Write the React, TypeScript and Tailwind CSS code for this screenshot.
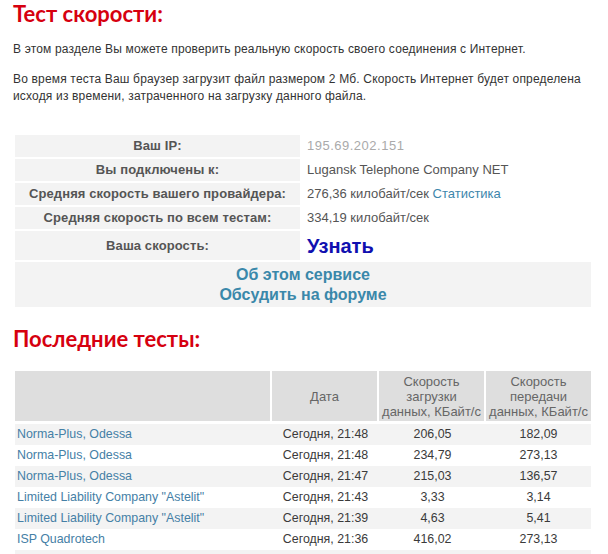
import React from "react";

const rows = [
  ["Norma-Plus, Odessa", "Сегодня, 21:48", "206,05", "182,09"],
  ["Norma-Plus, Odessa", "Сегодня, 21:48", "234,79", "273,13"],
  ["Norma-Plus, Odessa", "Сегодня, 21:47", "215,03", "136,57"],
  ['Limited Liability Company "Astelit"', "Сегодня, 21:43", "3,33", "3,14"],
  ['Limited Liability Company "Astelit"', "Сегодня, 21:39", "4,63", "5,41"],
  ["ISP Quadrotech", "Сегодня, 21:36", "416,02", "273,13"],
  ["", "", "", ""],
];

function Label({ children, tall }: { children: React.ReactNode; tall?: boolean }) {
  return (
    <div
      className={`bg-[#f3f3f3] flex items-center justify-center font-bold text-[13px] tracking-[0.1px] text-[#555] ${
        tall ? "h-[29px]" : "h-[22px]"
      }`}
    >
      {children}
    </div>
  );
}

function Value({ children, tall }: { children: React.ReactNode; tall?: boolean }) {
  return (
    <div className={`flex items-center pl-[5px] text-[13px] text-[#555] ${tall ? "h-[29px]" : "h-[22px]"}`}>
      {children}
    </div>
  );
}

export default function App() {
  return (
    <div className="w-[608px] h-[554px] overflow-hidden bg-white font-['Liberation_Sans',Arial,sans-serif]">
      <h1 className="pl-[13px] pt-[1px] h-[30px] text-[22px] leading-[26px] font-bold text-[#d6000f] font-['Lato',sans-serif]">
        Тест скорости:
      </h1>
      <p className="pl-[13px] mt-[11px] text-[12px] leading-[17px] tracking-[0.17px] text-[#333]">
        В этом разделе Вы можете проверить реальную скорость своего соединения с Интернет.
      </p>
      <p className="pl-[13px] mt-[13px] text-[12px] leading-[17px] tracking-[0.17px] text-[#333]">
        Во время теста Ваш браузер загрузит файл размером 2 Мб. Скорость Интернет будет определена
        <br />
        исходя из времени, затраченного на загрузку данного файла.
      </p>

      <div className="ml-[15px] mt-[30px] w-[576px] grid grid-cols-[285px_289px] gap-[2px]">
        <Label>Ваш IP:</Label>
        <Value>
          <span className="text-[#aaa] tracking-[0.5px]">195.69.202.151</span>
        </Value>
        <Label>Вы подключены к:</Label>
        <Value>Lugansk Telephone Company NET</Value>
        <Label>Средняя скорость вашего провайдера:</Label>
        <Value>
          276,36 килобайт/сек&nbsp;<span className="text-[#3d86ab]">Статистика</span>
        </Value>
        <Label>Средняя скорость по всем тестам:</Label>
        <Value>334,19 килобайт/сек</Value>
        <Label tall>Ваша скорость:</Label>
        <Value tall>
          <span className="text-[20px] font-bold text-[#1010b0] leading-[24px]">Узнать</span>
        </Value>
        <div className="col-span-2 h-[45px] bg-[#f3f3f3] flex flex-col items-center justify-center text-[16px] leading-[20px] font-bold text-[#3a88aa]">
          <span>Об этом сервисе</span>
          <span>Обсудить на форуме</span>
        </div>
      </div>

      <h2 className="pl-[13px] mt-[19px] h-[30px] text-[22px] leading-[26px] font-bold text-[#d6000f] font-['Lato',sans-serif]">
        Последние тесты:
      </h2>

      <div className="ml-[15px] mt-[15px] w-[576px]">
        <div className="grid grid-cols-[255px_105px_105px_105px] gap-[2px] h-[50px] text-[13px] leading-[15px] text-[#666] text-center">
          <div className="bg-[#dedede]"></div>
          <div className="bg-[#dedede] flex items-center justify-center">Дата</div>
          <div className="bg-[#dedede] flex items-center justify-center">
            Скорость
            <br />
            загрузки
            <br />
            данных, КБайт/с
          </div>
          <div className="bg-[#dedede] flex items-center justify-center">
            Скорость
            <br />
            передачи
            <br />
            данных, КБайт/с
          </div>
        </div>
        <div className="mt-[3px]">
          {rows.map((r, i) => (
            <div
              key={i}
              className={`grid grid-cols-[257px_107px_107px_105px] h-[21px] items-center text-[12.4px] text-[#3a3a3a] ${
                i % 2 === 0 ? "bg-[#f3f3f3]" : "bg-white"
              }`}
            >
              <div className="pl-[2px] text-[#4580a6]">{r[0]}</div>
              <div className="text-center">{r[1]}</div>
              <div className="text-center">{r[2]}</div>
              <div className="text-center">{r[3]}</div>
            </div>
          ))}
        </div>
      </div>
    </div>
  );
}
